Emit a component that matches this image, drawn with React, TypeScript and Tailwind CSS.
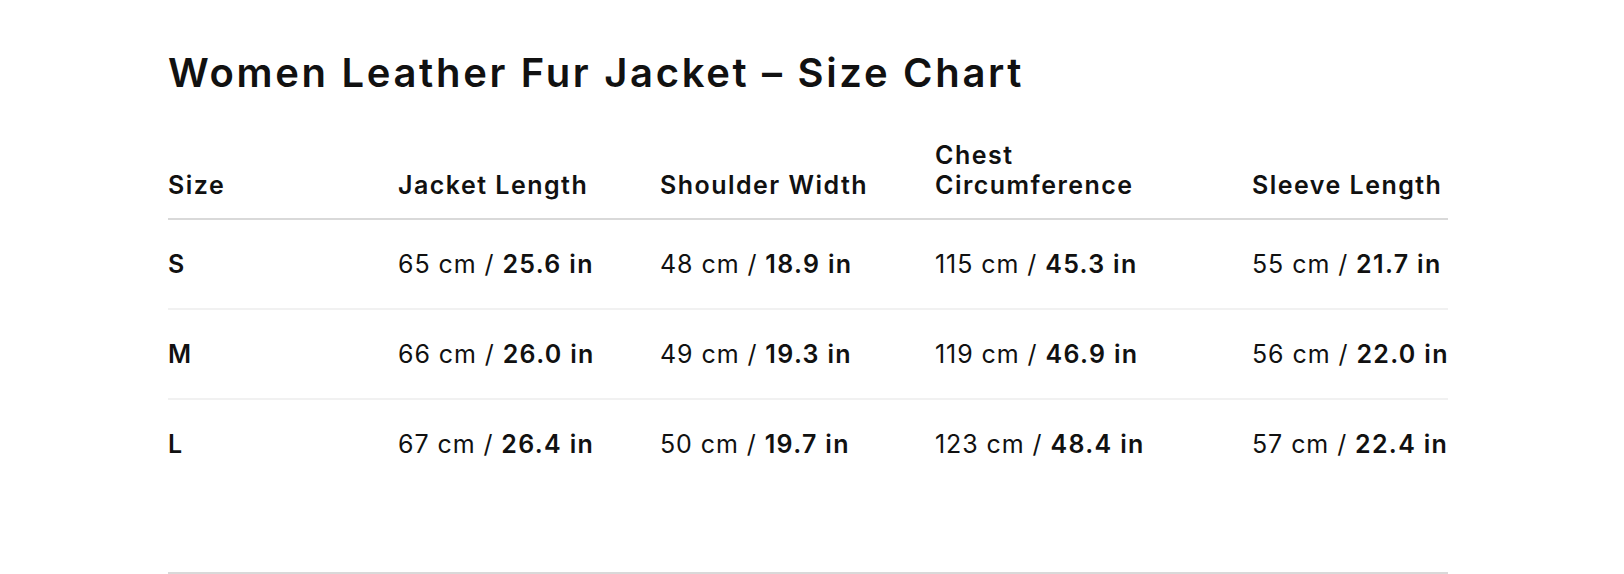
const rows = [
  { size: 'S', length: ['65', '25.6'], shoulder: ['48', '18.9'], chest: ['115', '45.3'], sleeve: ['55', '21.7'] },
  { size: 'M', length: ['66', '26.0'], shoulder: ['49', '19.3'], chest: ['119', '46.9'], sleeve: ['56', '22.0'] },
  { size: 'L', length: ['67', '26.4'], shoulder: ['50', '19.7'], chest: ['123', '48.4'], sleeve: ['57', '22.4'] },
];

const Measure = ({ v }: { v: string[] }) => (
  <span className="whitespace-nowrap tracking-[0.037em]">
    {v[0]} cm / <strong className="font-semibold tracking-[0.053em]">{v[1]} in</strong>
  </span>
);

const cols = 'grid grid-cols-[230px_262px_275px_317px_196px]';

export default function App() {
  return (
    <div className="min-h-screen bg-white text-[#111] font-['Inter','Liberation_Sans',sans-serif]">
      <div className="ml-[168px] w-[1280px] pt-[49px]">
        <h1 className="text-[40px] leading-[48px] font-semibold tracking-[0.067em] whitespace-nowrap">
          Women Leather Fur Jacket – Size Chart
        </h1>

        <div className="mt-[43px]">
          {/* Header */}
          <div className={`${cols} items-end border-b-2 border-[#d9d9d9] pb-[18px] text-[25px] leading-[30px] font-semibold tracking-[0.059em]`}>
            <div>Size</div>
            <div>Jacket Length</div>
            <div>Shoulder Width</div>
            <div>
              Chest
              <br />
              Circumference
            </div>
            <div className="whitespace-nowrap">Sleeve Length</div>
          </div>

          {/* Rows */}
          {rows.map((r, i) => (
            <div
              key={r.size}
              className={`${cols} items-center py-[29px] text-[25px] leading-[30px] ${
                i < rows.length - 1 ? 'border-b-2 border-[#f1f1f1]' : ''
              }`}
            >
              <div className="font-semibold">{r.size}</div>
              <Measure v={r.length} />
              <Measure v={r.shoulder} />
              <Measure v={r.chest} />
              <Measure v={r.sleeve} />
            </div>
          ))}
        </div>

        <hr className="mt-[84px] border-t-2 border-[#d9d9d9]" />
      </div>
    </div>
  );
}
